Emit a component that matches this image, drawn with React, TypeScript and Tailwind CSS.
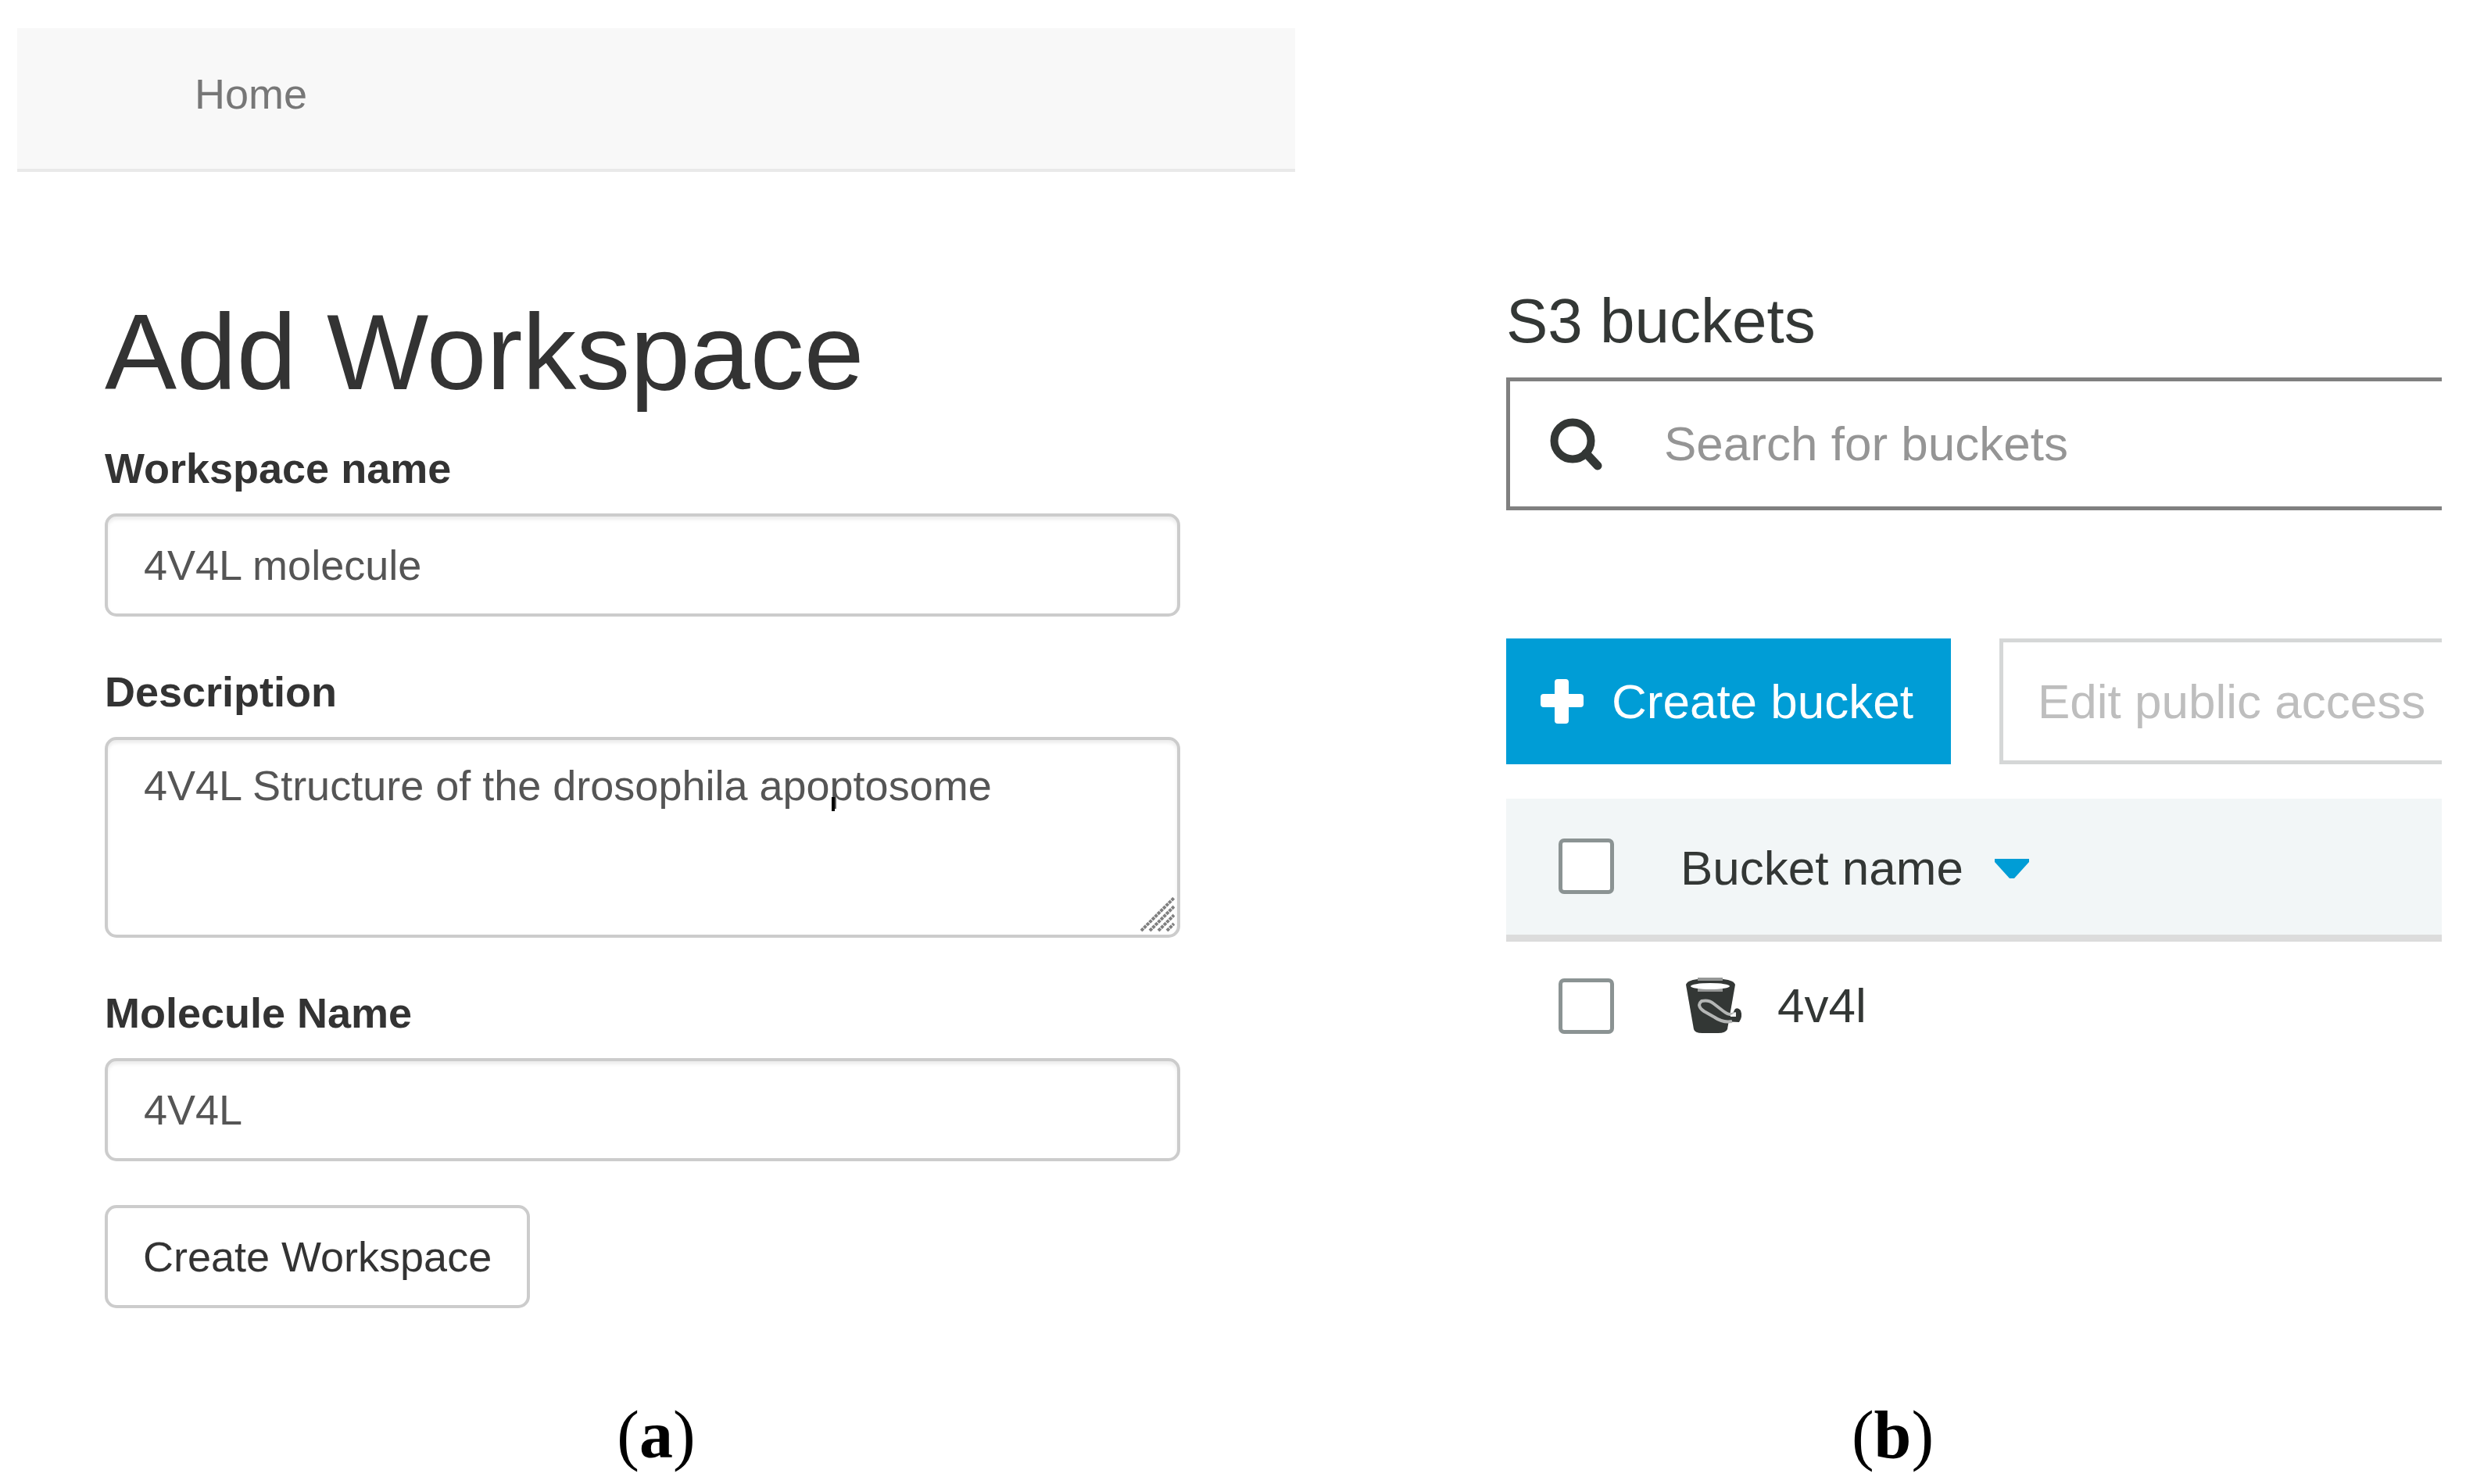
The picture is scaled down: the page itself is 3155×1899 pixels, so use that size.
import { useState } from "react";

function SearchIcon() {
  return (
    <svg viewBox="0 0 71 71" className="w-[71px] h-[71px] shrink-0" fill="none" stroke="#333735">
      <circle cx="31" cy="31" r="23.5" strokeWidth="10" />
      <path d="M48 47 L63 63" strokeWidth="11" strokeLinecap="round" />
    </svg>
  );
}

function PlusIcon() {
  return (
    <svg viewBox="0 0 61 58" className="w-[61px] h-[58px] shrink-0" fill="#ffffff">
      <rect x="21" y="0" width="18" height="57" rx="4" />
      <rect x="3" y="19" width="55" height="17" rx="4" />
    </svg>
  );
}

function BucketIcon() {
  return (
    <svg viewBox="0 0 76 72" className="w-[76px] h-[72px] shrink-0">
      <path d="M3 9 Q5 1 34 1 Q64 1 66 9 L56 66 Q54 71 44 71 H24 Q14 71 13 66 Z" fill="#333735" />
      <path d="M18 2 H50" stroke="#959796" strokeWidth="4" />
      <path d="M18 16 H50" stroke="#959796" strokeWidth="4" />
      <ellipse cx="34" cy="11" rx="25" ry="4" fill="#ffffff" />
      <path d="M52 43 L62 47 L66 40 Q70 38 73 42 Q76 50 71 57 L50 56 Z" fill="#333735" />
      <path
        d="M66 45 Q60 50 51 43 L38 33 Q32 28 23 30 Q16 36 26 43 L40 51 Q50 58 62 56"
        fill="none"
        stroke="#b4b6b5"
        strokeWidth="4"
      />
      <path d="M60 48 L67 44 V50 H60 Z" fill="#f4f4f4" />
    </svg>
  );
}

// Diagonal grip drawn in the corner of the description box
function ResizeGrip() {
  return (
    <svg
      viewBox="0 0 44 44"
      className="absolute right-[7px] bottom-[8px] w-[44px] h-[44px] pointer-events-none"
      stroke="#808080"
      strokeWidth="4"
      strokeDasharray="4 1"
    >
      <path d="M1 43 L43 1 M12 43 L43 12 M23 43 L43 23 M34 43 L43 34" />
    </svg>
  );
}

const labelClass = "block text-[54px] leading-[76px] font-bold text-[#333333]";
const fieldClass =
  "block w-full border-4 border-[#cccccc] rounded-[15px] px-[46px] text-[54px] text-[#555555] bg-white shadow-[inset_0_4px_4px_rgba(0,0,0,0.075)] outline-none";

function WorkspaceForm() {
  const [name, setName] = useState("4V4L molecule");
  const [description, setDescription] = useState(
    "4V4L Structure of the drosophila apoptosome"
  );
  const [molecule, setMolecule] = useState("4V4L");

  return (
    <section className="pt-[36px]">
      <nav className="bg-[#f8f8f8] border-b-4 border-[#e9e9e9] pt-[46px] pb-[58px] pl-[227px]">
        <a href="#" className="block w-fit text-[54px] leading-[76px] text-[#777777]">
          Home
        </a>
      </nav>

      <form
        onSubmit={(e) => e.preventDefault()}
        className="pt-[154px] pl-[112px] pr-[147px]"
      >
        <h1 className="text-[138px] leading-[152px] text-[#333333]">Add Workspace</h1>

        <div className="mt-[35px]">
          <label htmlFor="name" className={labelClass}>
            Workspace name
          </label>
          <input
            id="name"
            type="text"
            value={name}
            onChange={(e) => setName(e.target.value)}
            className={`${fieldClass} mt-5 h-[132px]`}
          />
        </div>

        <div className="mt-[58px]">
          <label htmlFor="description" className={labelClass}>
            Description
          </label>
          <div className="relative mt-5">
            <textarea
              id="description"
              value={description}
              onChange={(e) => setDescription(e.target.value)}
              className={`${fieldClass} h-[257px] pt-5 leading-[76px] resize-none overflow-hidden`}
            />
            <span className="absolute left-[930px] top-[77px] w-1 h-[18px] bg-black" />
            <ResizeGrip />
          </div>
        </div>

        <div className="mt-[58px]">
          <label htmlFor="molecule" className={labelClass}>
            Molecule Name
          </label>
          <input
            id="molecule"
            type="text"
            value={molecule}
            onChange={(e) => setMolecule(e.target.value)}
            className={`${fieldClass} mt-5 h-[132px]`}
          />
        </div>

        <button
          type="submit"
          className="mt-[56px] h-[132px] px-[45px] border-4 border-[#cccccc] rounded-[15px] bg-white text-[54px] text-[#333333] whitespace-nowrap"
        >
          Create Workspace
        </button>
      </form>
    </section>
  );
}

const checkboxClass =
  "block appearance-none w-[71px] h-[71px] border-[5px] border-[#8b9393] rounded-[7px] bg-white checked:bg-[#009dd6]";

function BucketList() {
  return (
    <section className="pt-[363px] text-[#333735] text-[62px] leading-[76px] min-w-0">
      <h2 className="text-[80px] leading-[96px]">S3 buckets</h2>

      <div className="mt-6 h-[170px] flex items-center border-[5px] border-r-0 border-[#808080] bg-white pl-[49px]">
        <SearchIcon />
        <input
          type="text"
          aria-label="Search for buckets"
          placeholder="Search for buckets"
          className="ml-[77px] flex-1 min-w-0 outline-none placeholder:text-[#959595]"
        />
      </div>

      <div className="mt-[164px] flex gap-[62px]">
        <button className="h-[161px] flex items-center gap-[33px] pl-[41px] pr-12 bg-[#009dd6] text-white whitespace-nowrap">
          <PlusIcon />
          Create bucket
        </button>
        <button
          disabled
          className="h-[161px] flex-1 min-w-0 pl-[44px] border-[5px] border-r-0 border-[#d5d7d7] bg-white text-[#bebebe] text-left whitespace-nowrap overflow-hidden"
        >
          Edit public access
        </button>
      </div>

      <table className="mt-[44px] w-full border-collapse">
        <thead>
          <tr className="h-[178px] bg-[#f2f6f7] border-b-[9px] border-[#dcdcdc]">
            <th className="w-[223px] p-0 pl-[67px]">
              <input type="checkbox" aria-label="Select all buckets" className={checkboxClass} />
            </th>
            <th className="p-0 pt-1 text-left font-normal">
              <div className="flex items-center gap-[40px]">
                Bucket name
                <svg viewBox="0 0 44 26" className="w-[44px] h-[26px]" fill="#009dd6">
                  <path d="M0 1 H44 V5 L25 26 H19 L0 5 Z" />
                </svg>
              </div>
            </th>
          </tr>
        </thead>
        <tbody>
          <tr className="h-[170px]">
            <td className="p-0 pl-[67px]">
              <input type="checkbox" aria-label="Select 4v4l" className={checkboxClass} />
            </td>
            <td className="p-0">
              <div className="flex items-center gap-[44px] pl-1">
                <BucketIcon />
                4v4l
              </div>
            </td>
          </tr>
        </tbody>
      </table>
    </section>
  );
}

export default function App() {
  return (
    <main className="bg-white font-['Liberation_Sans',sans-serif] pl-[22px] pr-[31px] pb-3 grid grid-cols-[1635fr_1197fr] gap-x-[270px]">
      <WorkspaceForm />
      <BucketList />
      <p className="mt-[112px] text-center text-black text-[86px] leading-[100px] font-['Liberation_Serif',serif]">
        (<b>a</b>)
      </p>
      <p className="mt-[112px] pr-[208px] text-center text-black text-[86px] leading-[100px] font-['Liberation_Serif',serif]">
        (<b>b</b>)
      </p>
    </main>
  );
}
